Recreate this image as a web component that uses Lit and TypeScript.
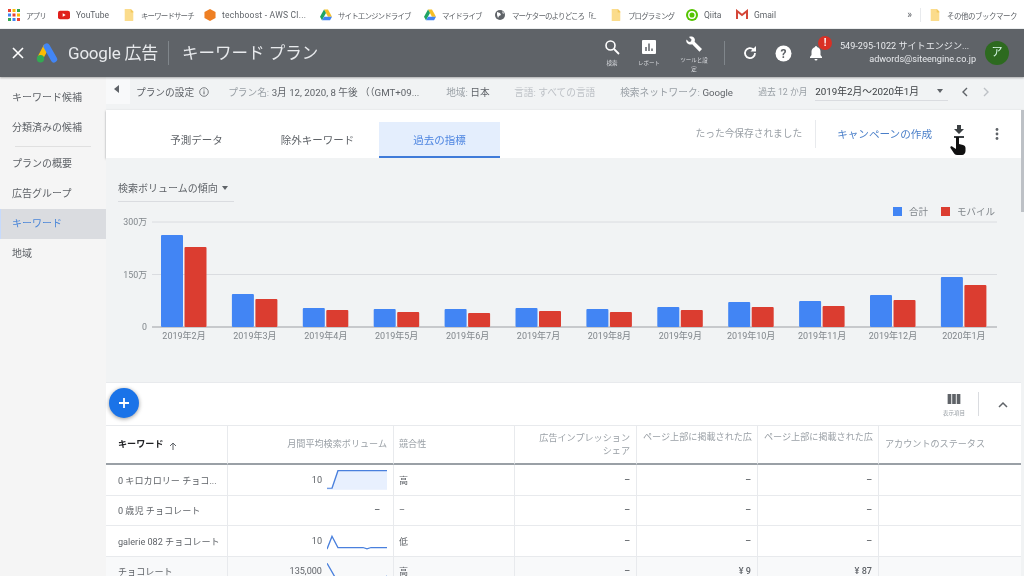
import { LitElement, css, html, svg } from "lit";
import { customElement } from "lit/decorators.js";

const folder = html`<svg class="bi" viewBox="0 0 12 14"><path d="M1 0h7l3 3v10a1 1 0 0 1-1 1H1z" fill="#fbdc8c" /><path d="M8 0l3 3v1H8z" fill="#f3c95f" /></svg>`;
const drive = html`<svg class="bi" viewBox="0 0 14 13"><path d="M4.700 0h4.600l4.700 8.500H9.300z" fill="#f6bf26" /><path d="M4.700 0L0 8.500l2.300 4L7 4.200z" fill="#1fa463" /><path d="M4.700 8.500L2.300 12.500h9.400l2.300-4z" fill="#4285f4" /></svg>`;

const appColors = ["#ea4335", "#fbbc04", "#34a853", "#4285f4", "#ea4335", "#fbbc04", "#34a853", "#4285f4", "#ea4335"];

const bookmarks = [
  { icon: html`<svg class="bi" viewBox="0 0 12 12">${[0, 4.5, 9].flatMap((y, r) => [0, 4.5, 9].map((x, c) => svg`<rect x=${x} y=${y} width="3" height="3" fill=${appColors[r * 3 + c]} />`))}</svg>`, label: "アプリ", w: 19, gap: 13, cls: "jp" },
  { icon: html`<svg class="bi" viewBox="0 0 14 10"><rect width="14" height="10" rx="2.500" fill="#e0201c" /><path d="M5.500 3v4l3.500-2z" fill="#fff" /></svg>`, label: "YouTube", w: 33, gap: 14, cls: "" },
  { icon: folder, label: "キーワードサーチ", w: 50, gap: 13, cls: "jp" },
  { icon: html`<svg class="bi" viewBox="0 0 12 13"><path d="M6 0l6 3.200v6.600L6 13 0 9.800V3.200z" fill="#ee7f23" /></svg>`, label: "techboost - AWS Cl...", w: 84, gap: 14, cls: "wide" },
  { icon: drive, label: "サイトエンジンドライブ", w: 73, gap: 13, cls: "jp" },
  { icon: drive, label: "マイドライブ", w: 39, gap: 13, cls: "jp" },
  { icon: html`<svg class="bi" viewBox="0 0 12 12"><circle cx="6" cy="6" r="5" fill="#5f6368" /><path d="M3 3l3 1 1 2-2 1-1 2-1-3zM8 2l2 2-1 1z" fill="#fff" /></svg>`, label: "マーケターのよりどころ「f...", w: 85, gap: 13, cls: "jp" },
  { icon: folder, label: "プログラミング", w: 45, gap: 13, cls: "jp" },
  { icon: html`<svg class="bi" viewBox="0 0 13 13"><circle cx="6.500" cy="6.500" r="6.500" fill="#55c500" /><circle cx="6.500" cy="6.500" r="3.500" fill="none" stroke="#fff" stroke-width="1.500" /></svg>`, label: "Qiita", w: 18, gap: 14, cls: "" },
  { icon: html`<svg class="bi" viewBox="0 0 12 10"><path d="M1 9V1l5 4 5-4v8" fill="none" stroke="#d44638" stroke-width="2" /></svg>`, label: "Gmail", w: 23, gap: 0, cls: "" },
];

const chart = [
  ["2019年2月", 92, 80], ["2019年3月", 33, 28], ["2019年4月", 19, 17], ["2019年5月", 18, 15],
  ["2019年6月", 18, 14], ["2019年7月", 19, 16], ["2019年8月", 18, 15], ["2019年9月", 20, 17],
  ["2019年10月", 25, 20], ["2019年11月", 26, 21], ["2019年12月", 32, 27], ["2020年1月", 50, 42],
] as const;

const rows = [
  { kw: "0 キロカロリー チョコ...", vol: "10", comp: "高", spark: "M0 24H5L11 2H60", area: true, a: "–", b: "–", c: "–" },
  { kw: "0 歳児 チョコレート", vol: "–", comp: "–", spark: "", area: false, a: "–", b: "–", c: "–" },
  { kw: "galerie 082 チョコレート", vol: "10", comp: "低", spark: "M0 24L5 8L11 22H36L40 23.500L44 22H60", area: false, a: "–", b: "–", c: "–" },
  { kw: "チョコレート", vol: "135,000", comp: "高", spark: "M0 4L11 28M50 26L60 20", area: false, a: "–", b: "¥ 9", c: "¥ 87" },
];

@customElement("app-root")
export class AppRoot extends LitElement {
  static styles = css`
    :host {
      display: block;
      width: 1024px;
      height: 576px;
      overflow: hidden;
      position: relative;
      font-family: Roboto, "Noto Sans CJK JP", sans-serif;
      color: #5f6368;
      background: #f1f3f4;
      filter: blur(0.35px);
    }
    svg { display: block; }

    .bookmarks {
      height: 28px;
      background: #fff;
      display: flex;
      align-items: center;
      padding: 2px 0 0 8px;
      box-sizing: border-box;
      font-size: 8.500px;
      color: #5f6368;
      white-space: nowrap;
    }
    .bm { display: flex; align-items: center; gap: 6px; }
    .bi { width: 12px; height: 12px; flex: none; }
    .bm .jp { font-size: 7.500px; letter-spacing: -0.9px; }
    .bm .wide { letter-spacing: 0.25px; }
    .bm .other { font-size: 7.500px; letter-spacing: -0.5px; width: 70px; }
    .bm-end { margin-left: auto; display: flex; align-items: center; padding-right: 7px; }
    .chev { font-size: 10px; margin-right: 8px; padding-right: 8px; border-right: 1px solid #e8eaed; line-height: 14px; }

    .header {
      height: 48px;
      margin-top: 1px;
      background: #5f6368;
      color: #fff;
      display: flex;
      align-items: center;
      box-shadow: 0 1px 2px rgba(0, 0, 0, 0.3);
      position: relative;
      white-space: nowrap;
    }
    .close { width: 12px; height: 12px; margin: 0 12px 0 12px; }
    .ads-logo { width: 22px; height: 20px; }
    .brand { font-size: 17px; margin-left: 10px; padding-bottom: 3px; color: #e8eaed; letter-spacing: -0.2px; }
    .head-sep { width: 1px; height: 24px; background: #80868b; margin: 0 13px 0 10px; }
    .title { font-size: 16.500px; padding-bottom: 3px; color: #e8eaed; }
    .tools { margin-left: auto; display: flex; align-items: flex-start; align-self: stretch; }
    .tool { display: flex; flex-direction: column; align-items: center; width: 32px; padding-top: 10px; font-size: 5.500px; line-height: 9px; text-align: center; color: #dadce0; white-space: normal; }
    .tool svg { width: 16px; height: 16px; margin-bottom: 4px; }
    .tool.report { margin-left: 5px; }
    .tool.wrench { margin-left: 13px; }
    .tool.wrench svg { width: 18px; height: 18px; margin-top: -3px; margin-bottom: 2px; }
    .v-sep { width: 1px; height: 24px; background: #80868b; margin: 0 17px 0 14px; align-self: center; }
    .round { width: 16px; height: 16px; align-self: center; }
    .round.help { margin-left: 17px; width: 17px; height: 17px; }
    .bell-wrap { position: relative; margin-left: 16px; align-self: center; }
    .bell-wrap svg { width: 16px; height: 16px; }
    .alert {
      position: absolute; left: 10px; top: -9px; width: 14px; height: 14px; border-radius: 50%;
      background: #d93025; color: #fff; font-size: 10px; font-weight: 700; line-height: 14px; text-align: center;
    }
    .account { text-align: right; margin: 0 9px 0 16px; font-size: 9.100px; line-height: 13px; color: #e8eaed; width: 136px; align-self: center; }
    .account div:first-child { padding-right: 8px; }
    .avatar {
      width: 24px; height: 24px; border-radius: 50%; background: #2d6a1f; color: #dfe; font-size: 11px;
      line-height: 24px; text-align: center; margin-right: 15px; align-self: center;
    }

    .body { display: grid; grid-template-columns: 106px 1fr; height: 499px; }
    .side { padding-top: 6px; font-size: 10px; background: #f5f5f5; }
    .nav { height: 30px; line-height: 30px; padding-left: 12px; color: #5f6368; box-sizing: border-box; }
    .nav.on { background: #dadce0; color: #4a86d8; border-left: 1px solid #c6dafc; padding-left: 11px; }
    .side hr { border: 0; border-top: 1px solid #e0e0e0; margin: 3px 15px 2px 15px; }

    .main { min-width: 0; display: flex; flex-direction: column; }
    .planbar {
      height: 33px;
      display: flex;
      align-items: center;
      font-size: 9.700px;
      white-space: nowrap;
      background: #f1f3f4;
      box-sizing: border-box;
      color: #9aa0a6;
      padding-bottom: 4px;
    }
    .collapse { width: 24px; height: 27px; padding-bottom: 3px; box-sizing: border-box; background: #f8f9fa; align-self: flex-start; display: flex; align-items: center; justify-content: center; margin-right: 6px; }
    .collapse i { border: 4px solid transparent; border-right: 5px solid #5f6368; border-left: 0; margin-right: 3px; }
    .planbar b { font-weight: 400; color: #5f6368; }
    .info { width: 10px; height: 10px; margin: 0 19px 0 5px; }
    .planbar span { flex: none; }
    .name { width: 218px; }
    .region { width: 68px; }
    .lang { width: 106px; color: #bdc1c6; }
    .net { width: 138px; }
    .planbar .past { width: 50px; font-size: 8.800px; }
    .range { width: 133px; margin: 0 11px 0 7px; border-bottom: 1px solid #dadce0; color: #3c4043; height: 19px; display: flex; align-items: center; justify-content: space-between; padding-right: 5px; box-sizing: border-box; font-size: 9.800px; }
    .caret { width: 0; height: 0; border: 3.500px solid transparent; border-top: 4px solid #5f6368; border-bottom: 0; }
    .pager { width: 12px; height: 12px; margin-right: 9px; }

    .tabs {
      height: 48px;
      background: #fff;
      display: flex;
      align-items: stretch;
      font-size: 10.500px;
      box-shadow: 0 1px 2px rgba(60, 64, 67, 0.5);
      position: relative;
      white-space: nowrap;
    }
    .tab { display: flex; align-items: center; justify-content: center; width: 121px; margin-top: 12px; padding-bottom: 2px; height: 36px; box-sizing: border-box; }
    .tab.first { margin-left: 30px; }
    .tab.on { background: #e4eefd; color: #4d85e0; border-bottom: 2px solid #3f7bd9; padding-bottom: 0; margin-left: 1px; }
    .saved { margin-left: auto; align-self: center; padding-bottom: 2px; color: #9aa0a6; font-size: 9.700px; }
    .t-sep { width: 1px; height: 28px; background: #e8eaed; align-self: center; margin: 0 21px 0 13px; }
    .create { align-self: center; padding-bottom: 2px; color: #4a7fc9; font-size: 10.600px; }
    .dl { width: 12px; height: 14px; align-self: center; margin: -4px 0 0 21px; }
    .more { width: 4px; height: 12px; align-self: center; margin: 0 25px 0 30px; }
    .hand { position: absolute; left: 950px; top: 137px; width: 16px; height: 18px; }

    .chart { height: 224px; padding-top: 19px; box-sizing: border-box; position: relative; background: #f1f3f4; }
    .metric { display: inline-flex; align-items: center; gap: 4px; margin-left: 12px; height: 24px; width: 116px; box-sizing: border-box; padding-bottom: 4px; border-bottom: 1px solid #dadce0; font-size: 10px; color: #5f6368; white-space: nowrap; }
    .plot { width: 918px; height: 170px; margin-top: 3px; }
    .plot text { font-size: 9px; fill: #80868b; font-family: Roboto, "Noto Sans CJK JP", sans-serif; }
    .plot text.axis { font-size: 8.800px; }
    .plot text.leg { font-size: 9.500px; }

    .table { background: #fff; margin-right: 3px; flex: 1; border-top: 1px solid #e8eaed; }
    .tbar { height: 42px; display: flex; align-items: center; justify-content: flex-end; position: relative; }
    .fab {
      position: absolute; left: 3px; top: 5px; width: 30px; height: 30px; border-radius: 50%; background: #1a73e8;
      box-shadow: 0 1px 4px rgba(0, 0, 0, 0.4); display: flex; align-items: center; justify-content: center;
    }
    .fab svg { width: 12px; height: 12px; }
    .cols { display: flex; flex-direction: column; align-items: center; width: 26px; font-size: 5.500px; color: #9aa0a6; margin-top: 3px; white-space: nowrap; }
    .cols svg { width: 14px; height: 10px; margin-bottom: 5px; }
    .tb-sep { width: 1px; height: 24px; background: #dadce0; margin: 0 19px 0 11px; }
    .up { width: 10px; height: 7px; margin-right: 13px; }

    .grid { display: grid; grid-template-columns: 122px 166px 121px 122px 121px 121px 142px; font-size: 9.100px; }
    .cell { border-right: 1px solid #e8eaed; border-bottom: 1px solid #e8eaed; height: 30.500px; box-sizing: border-box; padding: 0 6px 0 5px; display: flex; align-items: center; justify-content: flex-end; color: #5f6368; white-space: nowrap; }
    .cell.kw { justify-content: flex-start; padding-left: 12px; overflow: hidden; }
    .cell.left { justify-content: flex-start; }
    .cell.last { border-right: 0; }
    .cell.tint { background: #f8f9fa; }
    .head { height: 40px; border-top: 1px solid #e8eaed; border-bottom: 2px solid #9aa0a6; color: #9aa0a6; line-height: 13px; text-align: right; white-space: normal; }
    .head.kw { color: #202124; font-weight: 700; gap: 6px; }
    .head.kw svg { width: 8px; height: 8px; margin-top: 2px; }
    .head.left { text-align: left; }
    .head.clip { white-space: nowrap; overflow: hidden; justify-content: flex-start; padding-left: 6px; align-items: flex-start; padding-top: 5px; }
    .head.acct { padding-left: 6px; }
    .vol { display: flex; align-items: center; gap: 5px; }
    .vol .none { margin-right: 7px; font-weight: 500; }
    .spark { width: 60px; height: 24px; flex: none; margin-top: 2px; }
    .dash { color: #5f6368; font-weight: 500; }
    .scroll { position: absolute; right: 0; top: 110px; width: 3px; height: 102px; background: #bdc1c6; }
  `;

  private renderChart() {
    return html`<svg class="plot" viewBox="0 0 918 170">
      <line x1="46" x2="891" y1="17" y2="17" stroke="#dadce0" />
      <line x1="46" x2="891" y1="69.500" y2="69.500" stroke="#dadce0" />
      <line x1="46" x2="891" y1="122" y2="122" stroke="#b8bbbf" stroke-width="1.500" />
      <text class="axis" x="41" y="20" text-anchor="end">300万</text>
      <text class="axis" x="41" y="73" text-anchor="end">150万</text>
      <text class="axis" x="41" y="125" text-anchor="end">0</text>
      <rect x="787" y="2" width="9" height="9" fill="#4285f4" />
      <text class="leg" x="803" y="10">合計</text>
      <rect x="835" y="2" width="9" height="9" fill="#db3d30" />
      <text class="leg" x="851" y="10">モバイル</text>
      ${chart.map(([label, a, b], i) => {
        const x = 55 + i * 70.900;
        return svg`
          <rect x=${x} y=${122 - a} width="22" height=${a} rx="1" fill="#4285f4" />
          <rect x=${x + 23.500} y=${122 - b} width="22" height=${b} rx="1" fill="#db3d30" />
          <text x=${x + 23} y="134" text-anchor="middle">${label}</text>`;
      })}
    </svg>`;
  }

  render() {
    return html`
      <div class="bookmarks">
        ${bookmarks.map(
          (b) => html`<div class="bm" style="margin-right:${b.gap}px">${b.icon}<span class=${b.cls} style="width:${b.w}px">${b.label}</span></div>`,
        )}
        <div class="bm-end">
          <span class="chev">»</span>
          <div class="bm">${folder}<span class="other">その他のブックマーク</span></div>
        </div>
      </div>

      <div class="header">
        <svg class="close" viewBox="0 0 12 12"><path d="M1 1l10 10M11 1L1 11" stroke="#fff" stroke-width="1.600" /></svg>
        <svg class="ads-logo" viewBox="0 0 22 20">
          <path d="M8 1.500L2 13l5 3 6-11z" fill="#fbbc04" />
          <path d="M10.700 3.500L18 16.300" stroke="#4285f4" stroke-width="6.400" stroke-linecap="round" />
          <circle cx="4.500" cy="15.800" r="3.700" fill="#34a853" />
        </svg>
        <span class="brand">Google 広告</span>
        <span class="head-sep"></span>
        <span class="title">キーワード プラン</span>
        <div class="tools">
          <div class="tool"><svg viewBox="0 0 16 16"><circle cx="6.500" cy="6.500" r="4.500" fill="none" stroke="#fff" stroke-width="1.600" /><path d="M10 10l5 5" stroke="#fff" stroke-width="1.800" /></svg>検索</div>
          <div class="tool report"><svg viewBox="0 0 16 16"><rect x="1" y="1" width="14" height="14" rx="1" fill="#fff" /><path d="M5 12V8M8 12V4.500M11 12V9.500" stroke="#5f6368" stroke-width="1.500" /></svg>レポート</div>
          <div class="tool wrench"><svg viewBox="0 0 18 18"><path d="M1.500 3.500L4 6l2-.5.500-2L4 1c2-1 4.500-.5 5.500 1.500.5 1 .5 2.200.1 3.200L17 13l-2.500 2.700-7.300-7.400C5.500 9 3.500 8.500 2.300 7.300 1.300 6.300 1 4.800 1.500 3.500z" fill="#fff" /></svg>ツールと設定</div>
          <span class="v-sep"></span>
          <svg class="round" viewBox="0 0 16 16"><path d="M13 8a5 5 0 1 1-1.500-3.500" fill="none" stroke="#fff" stroke-width="1.800" /><path d="M14 1v5.500H8.500z" fill="#fff" /></svg>
          <svg class="round help" viewBox="0 0 17 17"><circle cx="8.500" cy="8.500" r="8" fill="#fff" /><text x="8.500" y="13" text-anchor="middle" font-size="12" font-weight="700" fill="#5f6368" font-family="Roboto">?</text></svg>
          <div class="bell-wrap">
            <svg viewBox="0 0 16 16"><path d="M8 1a1 1 0 0 1 1 1c2.500.5 3.500 2.500 3.500 4.500V10l1.500 2v1H2v-1l1.500-2V6.500C3.500 4.500 5 2.500 7 2a1 1 0 0 1 1-1zM6.500 14h3a1.500 1.500 0 0 1-3 0z" fill="#fff" /></svg>
            <span class="alert">!</span>
          </div>
          <div class="account"><div>549-295-1022 サイトエンジン...</div><div>adwords@siteengine.co.jp</div></div>
          <div class="avatar">ア</div>
        </div>
      </div>

      <div class="body">
        <nav class="side">
          <div class="nav">キーワード候補</div>
          <div class="nav">分類済みの候補</div>
          <hr />
          <div class="nav">プランの概要</div>
          <div class="nav">広告グループ</div>
          <div class="nav on">キーワード</div>
          <div class="nav">地域</div>
        </nav>

        <div class="main">
          <div class="planbar">
            <div class="collapse"><i></i></div>
            <span><b>プランの設定</b></span>
            <svg class="info" viewBox="0 0 10 10"><circle cx="5" cy="5" r="4.300" fill="none" stroke="#5f6368" stroke-width=".8" /><path d="M5 4.300v3M5 2.500v1" stroke="#5f6368" /></svg>
            <span class="name">プラン名: <b>3月 12, 2020, 8 午後 （（GMT+09...</b></span>
            <span class="region">地域: <b>日本</b></span>
            <span class="lang">言語: すべての言語</span>
            <span class="net">検索ネットワーク: <b>Google</b></span>
            <span class="past">過去 12 か月</span>
            <div class="range">2019年2月～2020年1月<i class="caret"></i></div>
            <svg class="pager" viewBox="0 0 12 12"><path d="M8 2L4 6l4 4" fill="none" stroke="#5f6368" stroke-width="1.400" /></svg>
            <svg class="pager" viewBox="0 0 12 12"><path d="M4 2l4 4-4 4" fill="none" stroke="#bdc1c6" stroke-width="1.400" /></svg>
          </div>

          <div class="tabs">
            <div class="tab first">予測データ</div>
            <div class="tab">除外キーワード</div>
            <div class="tab on">過去の指標</div>
            <span class="saved">たった今保存されました</span>
            <span class="t-sep"></span>
            <span class="create">キャンペーンの作成</span>
            <svg class="dl" viewBox="0 0 12 14"><path d="M4 0h4v4h3L6 9 1 4h3zM1 11h10v2H1z" fill="#3c4043" /></svg>
            <svg class="more" viewBox="0 0 4 12"><circle cx="2" cy="1.500" r="1.400" fill="#5f6368" /><circle cx="2" cy="6" r="1.400" fill="#5f6368" /><circle cx="2" cy="10.500" r="1.400" fill="#5f6368" /></svg>
          </div>

          <div class="chart">
            <div class="metric">検索ボリュームの傾向<i class="caret"></i></div>
            ${this.renderChart()}
          </div>

          <div class="table">
            <div class="tbar">
              <div class="fab"><svg viewBox="0 0 12 12"><path d="M6 1v10M1 6h10" stroke="#fff" stroke-width="1.800" /></svg></div>
              <div class="cols">
                <svg viewBox="0 0 14 11"><path d="M0 0h4v11H0zM5 0h4v11H5zM10 0h4v11h-4z" fill="#5f6368" /></svg>
                表示項目
              </div>
              <span class="tb-sep"></span>
              <svg class="up" viewBox="0 0 10 7"><path d="M1 6l4-4 4 4" fill="none" stroke="#5f6368" stroke-width="1.500" /></svg>
            </div>
            <div class="grid">
              <div class="cell head kw">キーワード<svg viewBox="0 0 8 8"><path d="M4 8V1M1 4l3-3 3 3" fill="none" stroke="#5f6368" /></svg></div>
              <div class="cell head">月間平均検索ボリューム</div>
              <div class="cell head left">競合性</div>
              <div class="cell head">広告インプレッション<br />シェア</div>
              <div class="cell head clip">ページ上部に掲載された広</div>
              <div class="cell head clip">ページ上部に掲載された広</div>
              <div class="cell head last left acct">アカウントのステータス</div>
              ${rows.map((r, i) => {
                const tint = i === 3 ? "tint" : "";
                return html`
                  <div class="cell kw ${tint}">${r.kw}</div>
                  <div class="cell ${tint}">
                    <div class="vol">
                      <span class=${r.spark ? "" : "none"}>${r.vol}</span>
                      ${r.spark
                        ? html`<svg class="spark" viewBox="0 0 60 30" preserveAspectRatio="none">
                            ${r.area ? svg`<path d="M0 24H5L11 2H60V26H0z" fill="#e8f0fe" />` : ""}
                            <path d=${r.spark} fill="none" stroke="#4a80dd" stroke-width="1.400" />
                          </svg>`
                        : ""}
                    </div>
                  </div>
                  <div class="cell left ${tint}">${r.comp}</div>
                  <div class="cell ${tint}"><span class="dash">${r.a}</span></div>
                  <div class="cell ${tint}"><span class="dash">${r.b}</span></div>
                  <div class="cell ${tint}"><span class="dash">${r.c}</span></div>
                  <div class="cell last ${tint}"></div>
                `;
              })}
            </div>
          </div>
        </div>
      </div>

      <div class="scroll"></div>
      <svg class="hand" viewBox="0 0 16 18"><path d="M6 0h3v7l4 1c1.500.4 2.500 1.500 2.500 3v3c0 2-1.500 4-3.500 4H7c-1.500 0-2.500-.8-3.200-2L.5 11c-.6-1.200.8-2.200 2-1.300L6 12z" fill="#111" /></svg>
    `;
  }
}
